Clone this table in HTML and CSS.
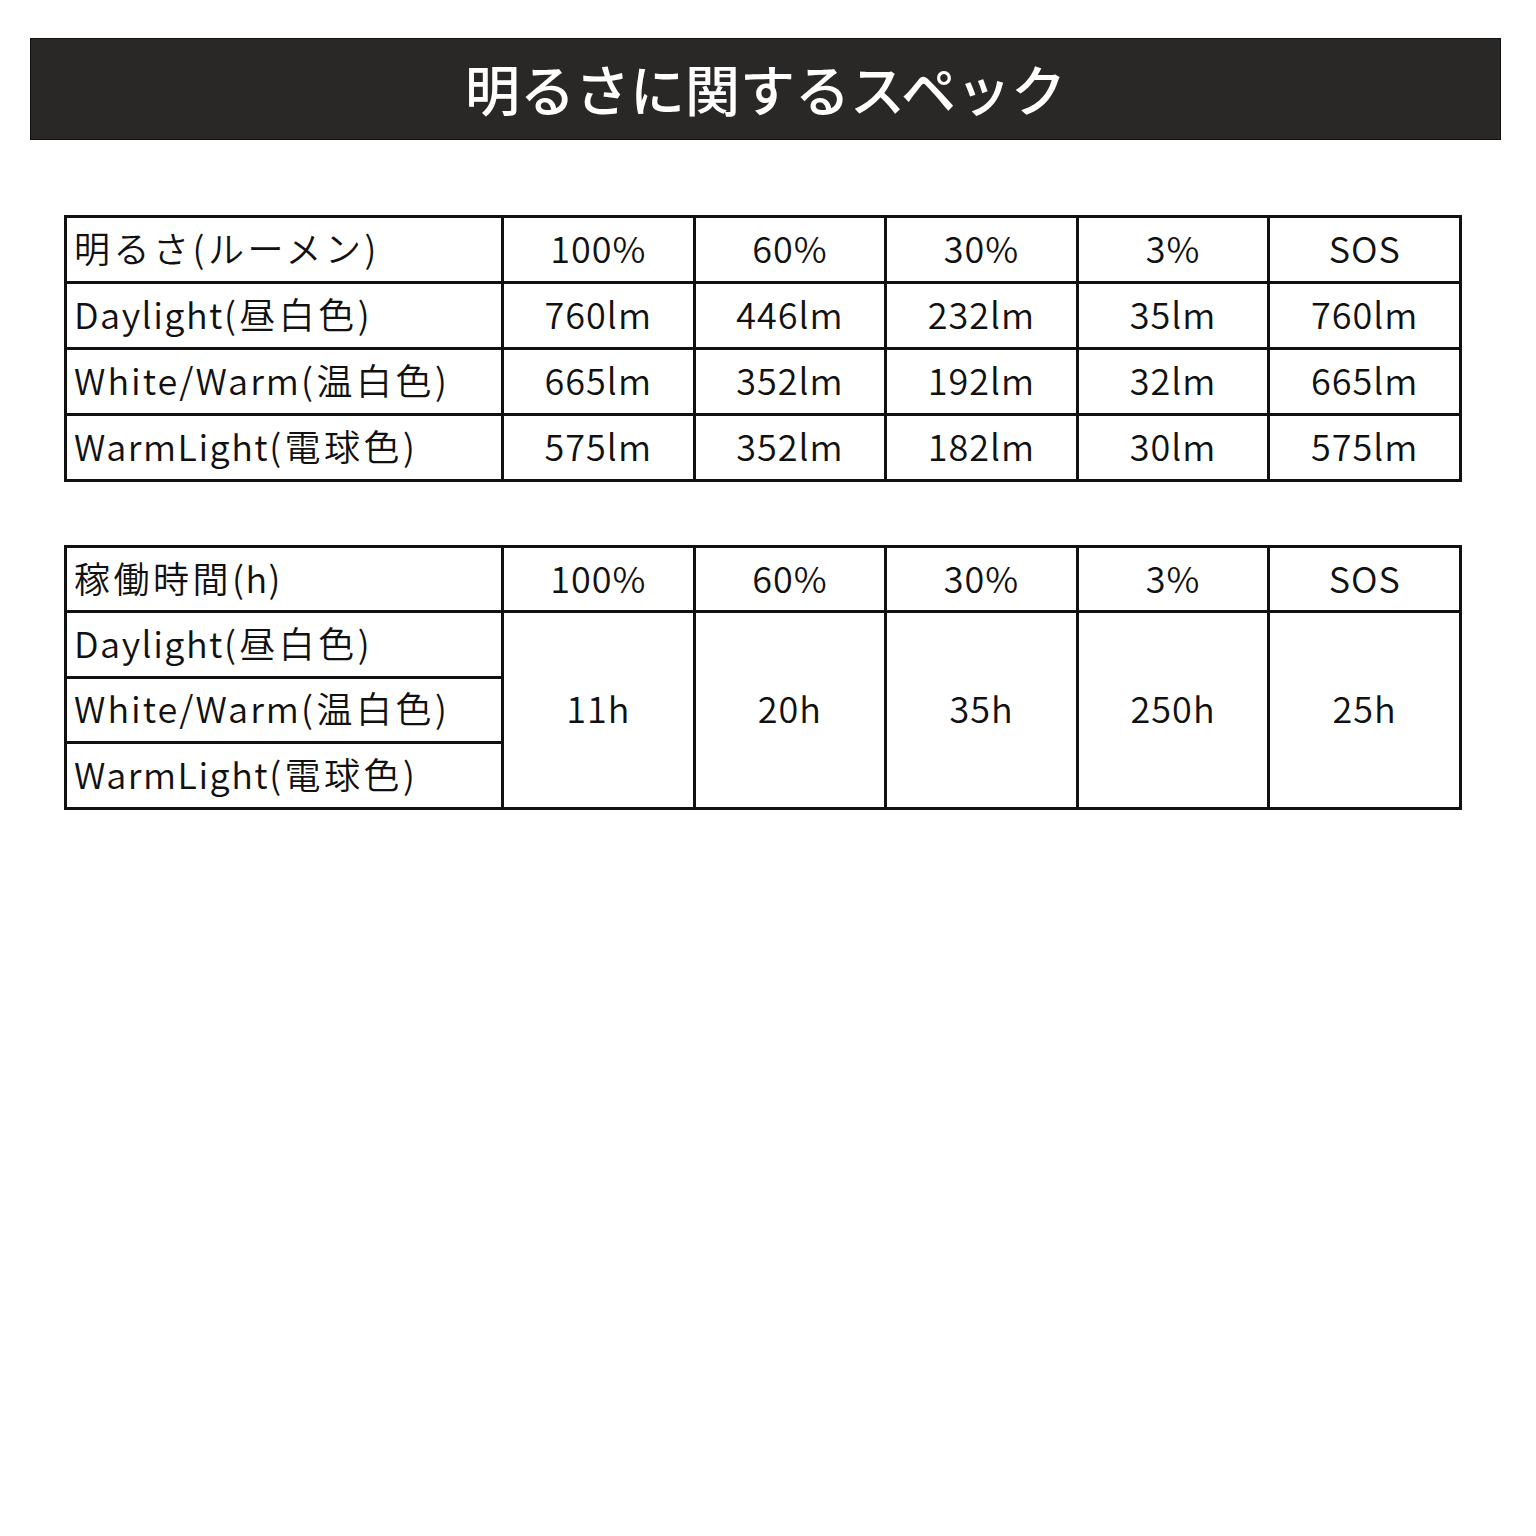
FILE: index.html
```html
<!DOCTYPE html>
<html lang="ja">
<head>
<meta charset="utf-8">
<link rel="stylesheet" href="styles.css">
</head>
<body>
<div class="page">
  <div class="banner">明るさに関するスペック</div>
  <table class="spec">
    <colgroup><col class="c-label"><col><col><col><col><col></colgroup>
    <tr><td class="label"><span class="jp">明るさ(ルーメン)</span></td><td>100%</td><td>60%</td><td>30%</td><td>3%</td><td>SOS</td></tr>
    <tr><td class="label">Daylight<span class="jp">(昼白色)</span></td><td>760lm</td><td>446lm</td><td>232lm</td><td>35lm</td><td>760lm</td></tr>
    <tr><td class="label"><span class="wide">White/Warm</span><span class="jp">(温白色)</span></td><td>665lm</td><td>352lm</td><td>192lm</td><td>32lm</td><td>665lm</td></tr>
    <tr><td class="label">WarmLight<span class="jp">(電球色)</span></td><td>575lm</td><td>352lm</td><td>182lm</td><td>30lm</td><td>575lm</td></tr>
  </table>
  <table class="spec spec2">
    <colgroup><col class="c-label"><col><col><col><col><col></colgroup>
    <tr><td class="label"><span class="jp">稼働時間</span>(h)</td><td>100%</td><td>60%</td><td>30%</td><td>3%</td><td>SOS</td></tr>
    <tr><td class="label">Daylight<span class="jp">(昼白色)</span></td><td rowspan="3">11h</td><td rowspan="3">20h</td><td rowspan="3">35h</td><td rowspan="3">250h</td><td rowspan="3">25h</td></tr>
    <tr><td class="label"><span class="wide">White/Warm</span><span class="jp">(温白色)</span></td></tr>
    <tr><td class="label">WarmLight<span class="jp">(電球色)</span></td></tr>
  </table>
</div>
</body>
</html>
```
FILE: styles.css
```css
html, body {
  margin: 0;
  padding: 0;
  background: #ffffff;
}
.page {
  width: 1536px;
  height: 1536px;
  padding-top: 38px;
  box-sizing: border-box;
  font-family: "Noto Sans CJK JP", "Noto Sans", sans-serif;
  color: #111;
}
.banner {
  margin-left: 30px;
  width: 1471px;
  height: 102px;
  box-sizing: border-box;
  background: #2a2826;
  border: 1px solid #111;
  color: #fff;
  font-size: 55px;
  font-weight: 500;
  line-height: 96px;
  text-align: center;
  letter-spacing: 0;
}
.spec {
  margin-left: 64px;
  margin-top: 75px;
  width: 1398px;
  border-collapse: collapse;
  table-layout: fixed;
  border: 3px solid #111;
}
.spec2 {
  margin-top: 63px;
}
.c-label {
  width: 437px;
}
.spec td {
  border: 3px solid #111;
  height: 58px;
  padding: 0 0 5px 0;
  font-size: 36px;
  font-weight: 350;
  letter-spacing: 1px;
  text-align: center;
  vertical-align: middle;
  line-height: 1;
  white-space: nowrap;
}
.spec td.label {
  text-align: left;
  padding-left: 7px;
  letter-spacing: 1.5px;
}
.spec td.label .jp {
  letter-spacing: 3.5px;
}
.spec td.label .wide {
  letter-spacing: 2px;
}
.spec2 td {
  height: 57.4px;
}
```
